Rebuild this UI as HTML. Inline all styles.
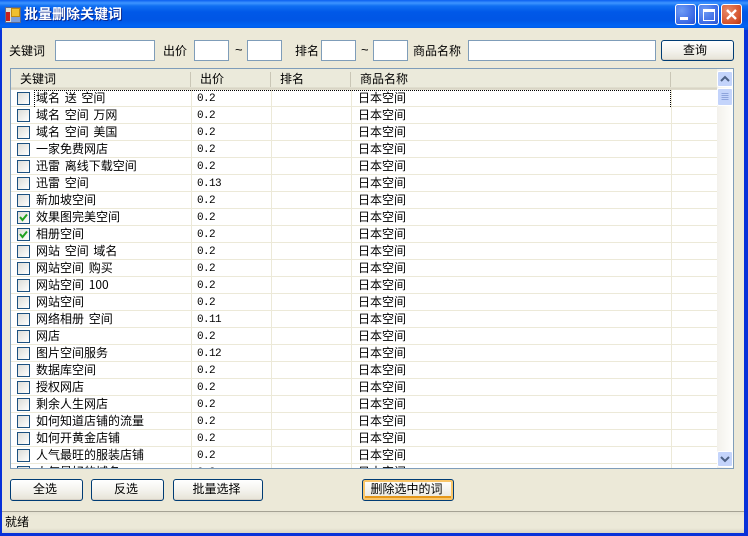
<!DOCTYPE html>
<html><head><meta charset="utf-8">
<style>
html,body{margin:0;padding:0;width:748px;height:536px;overflow:hidden;background:#0831d9}
*{box-sizing:border-box}
body{position:relative;font:12px/14px "WenQuanYi Zen Hei","Noto Sans CJK SC","Liberation Sans",sans-serif;color:#000}
.a{position:absolute;white-space:pre}
#tb{left:0;top:0;width:748px;height:30px;background:linear-gradient(180deg,#0a5ff0 0,#3d95ff 3px,#0f6ff2 6px,#0058e8 12px,#0056e5 20px,#0064f4 26px,#0052dc 30px)}
#cl{left:2px;top:28px;width:742px;height:505px;background:#ece9d8}
.t{height:14px}
.til{font-family:"Liberation Sans",sans-serif;font-size:13px}
.in{background:#fff;border:1px solid #7f9db9;height:21px;top:40px}
.btn{height:22px;border:1px solid #003c74;border-radius:3px;background:linear-gradient(180deg,#fff 0,#f4f3ee 50%,#e6e3d6 100%);text-align:center;line-height:17px;padding-right:3px;box-shadow:inset 0 -1px 0 #d6d0c5}
.w{position:absolute;width:21px;height:21px;top:4px;border:1px solid #fff;border-radius:3px;background:radial-gradient(circle at 30% 30%,#6e9cf5,#3a68e4 70%,#2a50cc)}
.r{position:absolute;left:11px;width:706px;height:17px;background:#fff;border-bottom:1px solid #ece9d8;overflow:hidden}
.r i{position:absolute;top:0;width:1px;height:17px;background:#ece9d8}
.r b{position:absolute;left:6px;top:2px;width:13px;height:13px;border:1px solid #1c5180;background:linear-gradient(135deg,#dcdcd7,#fff);font-weight:normal}
.r span{position:absolute;top:1px;white-space:pre}
.k{left:25px;word-spacing:2px}
.r .p{left:186px;top:2px;font-family:"Liberation Mono",monospace;font-size:11px;letter-spacing:-.6px}
.n{left:347px}
</style></head><body>
<div class="a" id="tb"></div>
<div class="a" style="left:5px;top:7px;width:16px;height:16px;background:#e4e0d0;border:1px solid #5a6a90"></div>
<div class="a" style="left:6px;top:12px;width:4px;height:9px;background:#c8201c"></div>
<div class="a" style="left:11px;top:8px;width:9px;height:9px;background:#f0c030;border:1px solid #c08a10"></div>
<div class="a" style="left:11px;top:17px;width:9px;height:5px;background:#7f9fd8"></div>
<div class="a t" style="left:24px;top:7px;color:#fff;font-weight:bold;font-size:14px;line-height:15px;text-shadow:1px 1px 0 #0a2a90">批量删除关键词</div>
<div class="w" style="left:675px"><div class="a" style="left:4px;top:12px;width:8px;height:3px;background:#fff"></div></div>
<div class="w" style="left:698px"><div class="a" style="left:4px;top:4px;width:12px;height:12px;border:1px solid #fff;border-top-width:3px"></div></div>
<div class="w" style="left:721px;background:radial-gradient(circle at 30% 30%,#e88a68,#d4512a 70%,#b03510)">
<svg class="a" style="left:3px;top:3px" width="13" height="13" viewBox="0 0 13 13"><path d="M2 2L11 11M11 2L2 11" stroke="#fff" stroke-width="2.4"/></svg></div>
<div class="a" id="cl"></div>

<div class="a t" style="left:9px;top:44px">关键词</div>
<div class="a in" style="left:55px;width:100px"></div>
<div class="a t" style="left:163px;top:44px">出价</div>
<div class="a in" style="left:194px;width:35px"></div>
<div class="a t til" style="left:235px;top:43px">~</div>
<div class="a in" style="left:247px;width:35px"></div>
<div class="a t" style="left:295px;top:44px">排名</div>
<div class="a in" style="left:321px;width:35px"></div>
<div class="a t til" style="left:361px;top:43px">~</div>
<div class="a in" style="left:373px;width:35px"></div>
<div class="a t" style="left:413px;top:44px">商品名称</div>
<div class="a in" style="left:468px;width:188px"></div>
<div class="a btn" style="left:661px;top:40px;width:73px;height:21px;padding-right:5px">查询</div>

<div class="a" style="left:10px;top:68px;width:724px;height:401px;border:1px solid #7f9db9;background:#fff;overflow:hidden"></div>
<div class="a" style="left:11px;top:69px;width:706px;height:21px;background:linear-gradient(180deg,#ebeadb 0,#ebeadb 18px,#d6d2c2 19px,#e2dfd0 21px)"></div>
<div class="a" style="left:190px;top:72px;width:1px;height:15px;background:#c9c6b6"></div>
<div class="a" style="left:270px;top:72px;width:1px;height:15px;background:#c9c6b6"></div>
<div class="a" style="left:350px;top:72px;width:1px;height:15px;background:#c9c6b6"></div>
<div class="a" style="left:670px;top:72px;width:1px;height:15px;background:#c9c6b6"></div>
<div class="a t" style="left:20px;top:72px">关键词</div>
<div class="a t" style="left:200px;top:72px">出价</div>
<div class="a t" style="left:280px;top:72px">排名</div>
<div class="a t" style="left:360px;top:72px">商品名称</div>

<div id="rows" class="a" style="left:0;top:0;width:748px;height:468px;overflow:hidden">
<div class="r" style="top:90px"><i style="left:180px"></i><i style="left:260px"></i><i style="left:340px"></i><i style="left:660px"></i><b></b><span class="k">域名 送 空间</span><span class="p">0.2</span><span class="n">日本空间</span></div>
<div class="r" style="top:107px"><i style="left:180px"></i><i style="left:260px"></i><i style="left:340px"></i><i style="left:660px"></i><b></b><span class="k">域名 空间 万网</span><span class="p">0.2</span><span class="n">日本空间</span></div>
<div class="r" style="top:124px"><i style="left:180px"></i><i style="left:260px"></i><i style="left:340px"></i><i style="left:660px"></i><b></b><span class="k">域名 空间 美国</span><span class="p">0.2</span><span class="n">日本空间</span></div>
<div class="r" style="top:141px"><i style="left:180px"></i><i style="left:260px"></i><i style="left:340px"></i><i style="left:660px"></i><b></b><span class="k">一家免费网店</span><span class="p">0.2</span><span class="n">日本空间</span></div>
<div class="r" style="top:158px"><i style="left:180px"></i><i style="left:260px"></i><i style="left:340px"></i><i style="left:660px"></i><b></b><span class="k">迅雷 离线下载空间</span><span class="p">0.2</span><span class="n">日本空间</span></div>
<div class="r" style="top:175px"><i style="left:180px"></i><i style="left:260px"></i><i style="left:340px"></i><i style="left:660px"></i><b></b><span class="k">迅雷 空间</span><span class="p">0.13</span><span class="n">日本空间</span></div>
<div class="r" style="top:192px"><i style="left:180px"></i><i style="left:260px"></i><i style="left:340px"></i><i style="left:660px"></i><b></b><span class="k">新加坡空间</span><span class="p">0.2</span><span class="n">日本空间</span></div>
<div class="r" style="top:209px"><i style="left:180px"></i><i style="left:260px"></i><i style="left:340px"></i><i style="left:660px"></i><b><svg width="11" height="11" style="position:absolute;left:0;top:0"><path d="M2 5L4.5 8L9 2.5" fill="none" stroke="#21a121" stroke-width="2"/></svg></b><span class="k">效果图完美空间</span><span class="p">0.2</span><span class="n">日本空间</span></div>
<div class="r" style="top:226px"><i style="left:180px"></i><i style="left:260px"></i><i style="left:340px"></i><i style="left:660px"></i><b><svg width="11" height="11" style="position:absolute;left:0;top:0"><path d="M2 5L4.5 8L9 2.5" fill="none" stroke="#21a121" stroke-width="2"/></svg></b><span class="k">相册空间</span><span class="p">0.2</span><span class="n">日本空间</span></div>
<div class="r" style="top:243px"><i style="left:180px"></i><i style="left:260px"></i><i style="left:340px"></i><i style="left:660px"></i><b></b><span class="k">网站 空间 域名</span><span class="p">0.2</span><span class="n">日本空间</span></div>
<div class="r" style="top:260px"><i style="left:180px"></i><i style="left:260px"></i><i style="left:340px"></i><i style="left:660px"></i><b></b><span class="k">网站空间 购买</span><span class="p">0.2</span><span class="n">日本空间</span></div>
<div class="r" style="top:277px"><i style="left:180px"></i><i style="left:260px"></i><i style="left:340px"></i><i style="left:660px"></i><b></b><span class="k">网站空间 100</span><span class="p">0.2</span><span class="n">日本空间</span></div>
<div class="r" style="top:294px"><i style="left:180px"></i><i style="left:260px"></i><i style="left:340px"></i><i style="left:660px"></i><b></b><span class="k">网站空间</span><span class="p">0.2</span><span class="n">日本空间</span></div>
<div class="r" style="top:311px"><i style="left:180px"></i><i style="left:260px"></i><i style="left:340px"></i><i style="left:660px"></i><b></b><span class="k">网络相册 空间</span><span class="p">0.11</span><span class="n">日本空间</span></div>
<div class="r" style="top:328px"><i style="left:180px"></i><i style="left:260px"></i><i style="left:340px"></i><i style="left:660px"></i><b></b><span class="k">网店</span><span class="p">0.2</span><span class="n">日本空间</span></div>
<div class="r" style="top:345px"><i style="left:180px"></i><i style="left:260px"></i><i style="left:340px"></i><i style="left:660px"></i><b></b><span class="k">图片空间服务</span><span class="p">0.12</span><span class="n">日本空间</span></div>
<div class="r" style="top:362px"><i style="left:180px"></i><i style="left:260px"></i><i style="left:340px"></i><i style="left:660px"></i><b></b><span class="k">数据库空间</span><span class="p">0.2</span><span class="n">日本空间</span></div>
<div class="r" style="top:379px"><i style="left:180px"></i><i style="left:260px"></i><i style="left:340px"></i><i style="left:660px"></i><b></b><span class="k">授权网店</span><span class="p">0.2</span><span class="n">日本空间</span></div>
<div class="r" style="top:396px"><i style="left:180px"></i><i style="left:260px"></i><i style="left:340px"></i><i style="left:660px"></i><b></b><span class="k">剩余人生网店</span><span class="p">0.2</span><span class="n">日本空间</span></div>
<div class="r" style="top:413px"><i style="left:180px"></i><i style="left:260px"></i><i style="left:340px"></i><i style="left:660px"></i><b></b><span class="k">如何知道店铺的流量</span><span class="p">0.2</span><span class="n">日本空间</span></div>
<div class="r" style="top:430px"><i style="left:180px"></i><i style="left:260px"></i><i style="left:340px"></i><i style="left:660px"></i><b></b><span class="k">如何开黄金店铺</span><span class="p">0.2</span><span class="n">日本空间</span></div>
<div class="r" style="top:447px"><i style="left:180px"></i><i style="left:260px"></i><i style="left:340px"></i><i style="left:660px"></i><b></b><span class="k">人气最旺的服装店铺</span><span class="p">0.2</span><span class="n">日本空间</span></div>
<div class="r" style="top:464px"><i style="left:180px"></i><i style="left:260px"></i><i style="left:340px"></i><i style="left:660px"></i><b></b><span class="k">人气最好的域名</span><span class="p">0.2</span><span class="n">日本空间</span></div>
</div>
<div class="a" style="left:34px;top:90px;width:637px;height:17px;border:1px dotted #000;border-bottom:0"></div>

<div class="a" style="left:717px;top:69px;width:16px;height:399px;background:linear-gradient(90deg,#f3f1ec,#fefefb)"></div>
<div class="a" style="left:717px;top:71px;width:16px;height:16px;background:#c4d4fb;border:1px solid #fff;border-radius:2px"><svg width="14" height="14" style="position:absolute;left:0;top:0"><path d="M3 9L7 5L11 9" fill="none" stroke="#4d6185" stroke-width="2"/></svg></div>
<div class="a" style="left:717px;top:88px;width:16px;height:18px;background:#c4d4fb;border:1px solid #fff;border-radius:2px"><svg width="14" height="16" style="position:absolute;left:0;top:0"><path d="M3.5 4.5H10.5M3.5 6.5H10.5M3.5 8.5H10.5M3.5 10.5H10.5" stroke="#8ea4dc"/></svg></div>
<div class="a" style="left:717px;top:451px;width:16px;height:16px;background:#c4d4fb;border:1px solid #fff;border-radius:2px"><svg width="14" height="14" style="position:absolute;left:0;top:0"><path d="M3 5L7 9L11 5" fill="none" stroke="#4d6185" stroke-width="2"/></svg></div>

<div class="a btn" style="left:10px;top:479px;width:73px">全选</div>
<div class="a btn" style="left:91px;top:479px;width:73px">反选</div>
<div class="a btn" style="left:173px;top:479px;width:90px">批量选择</div>
<div class="a btn" style="left:362px;top:479px;width:92px;box-shadow:inset 0 0 0 2px #f9c66a,inset 0 -2px 0 2px #e5971a">删除选中的词</div>

<div class="a" style="left:2px;top:511px;width:742px;height:1px;background:#a5a294"></div>
<div class="a" style="left:2px;top:512px;width:742px;height:21px;background:linear-gradient(180deg,#e4e1d1,#ece9d8 4px,#ece9d8 16px,#d8d4c4)"></div>
<div class="a t" style="left:5px;top:515px">就绪</div>
</body></html>
